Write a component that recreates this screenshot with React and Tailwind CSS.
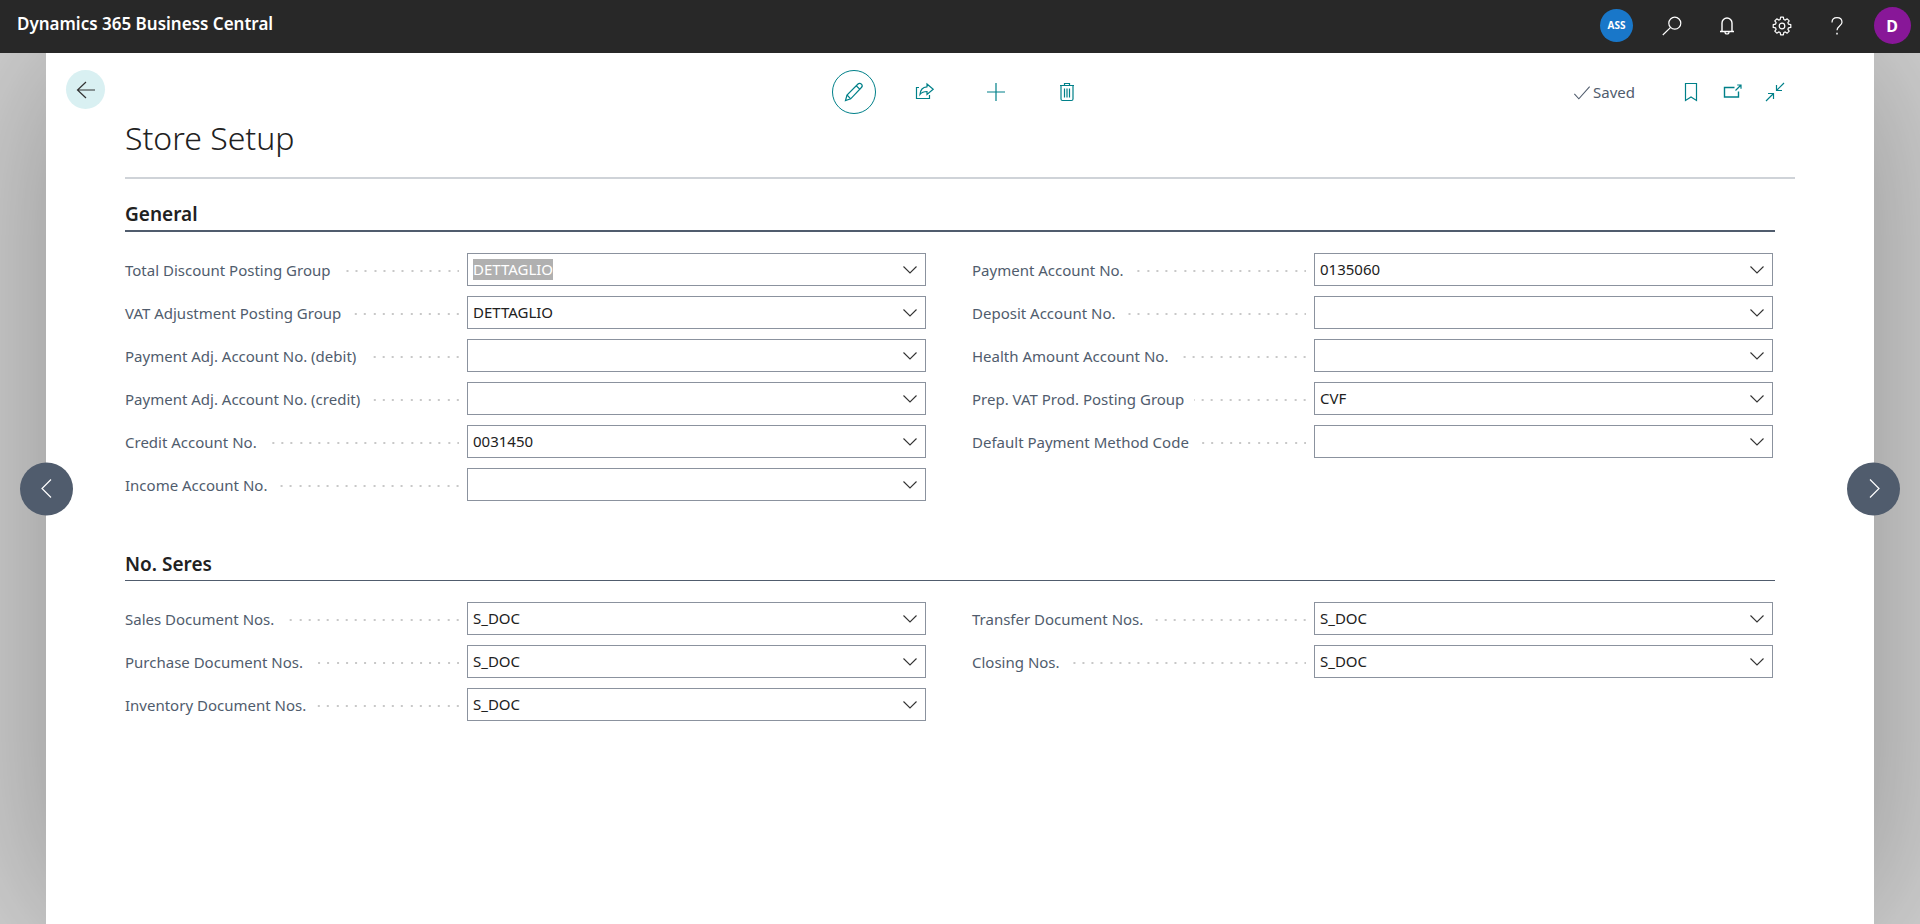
import React from 'react';

const generalLeft = [
  { id: 'totalDiscount', label: 'Total Discount Posting Group', value: 'DETTAGLIO', selected: true },
  { id: 'vatAdjustment', label: 'VAT Adjustment Posting Group', value: 'DETTAGLIO' },
  { id: 'paymentDebit', label: 'Payment Adj. Account No. (debit)', value: '' },
  { id: 'paymentCredit', label: 'Payment Adj. Account No. (credit)', value: '' },
  { id: 'creditAccount', label: 'Credit Account No.', value: '0031450' },
  { id: 'incomeAccount', label: 'Income Account No.', value: '' },
];

const generalRight = [
  { id: 'paymentAccount', label: 'Payment Account No.', value: '0135060' },
  { id: 'depositAccount', label: 'Deposit Account No.', value: '' },
  { id: 'healthAmount', label: 'Health Amount Account No.', value: '' },
  { id: 'prepVat', label: 'Prep. VAT Prod. Posting Group', value: 'CVF' },
  { id: 'defaultPayment', label: 'Default Payment Method Code', value: '' },
];

const seriesLeft = [
  { id: 'salesNos', label: 'Sales Document Nos.', value: 'S_DOC' },
  { id: 'purchaseNos', label: 'Purchase Document Nos.', value: 'S_DOC' },
  { id: 'inventoryNos', label: 'Inventory Document Nos.', value: 'S_DOC' },
];

const seriesRight = [
  { id: 'transferNos', label: 'Transfer Document Nos.', value: 'S_DOC' },
  { id: 'closingNos', label: 'Closing Nos.', value: 'S_DOC' },
];

const Icon = ({ children, className = 'size-5' }) => (
  <svg
    viewBox="0 0 20 20"
    fill="none"
    stroke="currentColor"
    strokeWidth="1.2"
    className={className}
    aria-hidden="true"
  >
    {children}
  </svg>
);

const SearchIcon = () => (
  <Icon>
    <circle cx="12.8" cy="7.2" r="6" />
    <path d="M8.6 11.4L.8 19" />
  </Icon>
);

const BellIcon = () => (
  <Icon>
    <path d="M3 15.5h14M5 15.5V7a5 5 0 0 1 10 0v8.5" strokeWidth="1.4" />
    <path d="M8 16a2 2 0 0 0 4 0" />
  </Icon>
);

const GearIcon = () => (
  <Icon>
    <circle cx="10" cy="10" r="2.8" />
    <path
      strokeLinejoin="round"
      d="M8.6 1.2h2.8l.4 2.3 1.5.6 1.9-1.3 2 2-1.3 1.9.6 1.5 2.3.4v2.8l-2.3.4-.6 1.5 1.3 1.9-2 2-1.9-1.3-1.5.6-.4 2.3H8.6l-.4-2.3-1.5-.6-1.9 1.3-2-2 1.3-1.9-.6-1.5-2.3-.4V8.6l2.3-.4.6-1.5-1.3-1.9 2-2 1.9 1.3 1.5-.6z"
    />
  </Icon>
);

const HelpIcon = () => (
  <Icon>
    <path d="M5 6.5C5 3.4 7 1.6 10 1.6s5 1.8 5 4.6c0 3.6-5 4.2-5 8.1" />
    <path d="M10 16.8v1.8" strokeWidth="1.5" />
  </Icon>
);

const BackIcon = () => (
  <Icon>
    <path d="M19 10H1.5M10 2L1.5 10l8.5 8" />
  </Icon>
);

const PencilIcon = () => (
  <Icon>
    <path d="M1.500 18.500l1.500-5.500L14 2c1-1 2.500-.8 3.400.1s1 2.400 0 3.400L6.700 16.800z" />
    <path d="M12.200 3.800l3.800 3.600M3 13l3.700 3.800" />
  </Icon>
);

const ShareIcon = () => (
  <Icon>
    <path d="M4 5.500H1.500v11h13V13" />
    <path d="M12 2l6.200 5.200L12 12.500V9.500c-3.500 0-5.500 1-7 3 .3-4.500 2.700-7.400 7-7.700z" />
  </Icon>
);

const PlusIcon = () => (
  <Icon>
    <path d="M10 1v18M1 10h18" />
  </Icon>
);

const TrashIcon = () => (
  <Icon>
    <path d="M3 3.500h14M7.500 3.500v-2h5v2M4 3.500V17a1.500 1.500 0 0 0 1.500 1.500h9A1.500 1.500 0 0 0 16 17V3.500" />
    <path d="M7.500 6.500v9M10 6.500v9M12.500 6.500v9" />
  </Icon>
);

const CheckIcon = () => (
  <Icon className="size-[18px]">
    <path d="M1.500 12l5 5.500L18.500 4" />
  </Icon>
);

const BookmarkIcon = () => (
  <Icon>
    <path d="M4.500 1.500h11v17L10 15l-5.500 3.500z" />
  </Icon>
);

const PopOutIcon = () => (
  <Icon>
    <path d="M11.500 5.500H1.500v9.500h14V9.500" strokeWidth="1.4" />
    <path d="M12.500 8.500L18 3M14.200 3H18v3.800" />
  </Icon>
);

const CollapseIcon = () => (
  <Icon>
    <path d="M1 19l7.500-7.500M3 11.500h5.500V17M19 1l-7.500 7.500M17 8.500h-5.500V3" />
  </Icon>
);

const ChevronDown = () => (
  <svg viewBox="0 0 16 16" fill="none" stroke="currentColor" strokeWidth="1.1" className="size-4" aria-hidden="true">
    <path d="M1.500 4.500L8 11l6.500-6.500" />
  </svg>
);

const LookupField = ({ id, label, value, selected }) => (
  <div className="flex items-center">
    <div className="flex w-[342px] shrink-0 items-center gap-2.5 pr-2">
      <label htmlFor={id} className="pt-0.5 whitespace-nowrap text-[#505c6d]">
        {label}
      </label>
      <span className="mt-[3px] h-0.5 flex-1 bg-[linear-gradient(to_right,transparent_7px,#c8c8c8_7px_9px,transparent_9px_16px,#c8c8c8_16px_18px,transparent_18px_26px,#c8c8c8_26px_28px,transparent_28px_35px,#c8c8c8_35px_37px)] bg-[length:37px_2px] bg-right bg-repeat-x" />
    </div>
    <div className="flex h-[33px] min-w-0 flex-1 items-center border border-[#8b929e] bg-white">
      <input
        id={id}
        type="text"
        defaultValue={value}
        autoFocus={selected}
        onFocus={(e) => e.target.select()}
        className="ml-[5px] h-[21px] min-w-0 flex-1 leading-[21px] text-[#212121] outline-none selection:bg-[#b0b0b0] selection:text-white"
      />
      <button type="button" aria-label={'Choose a value for ' + label} className="flex w-[30px] justify-center text-[#333]">
        <ChevronDown />
      </button>
    </div>
  </div>
);

const FieldColumn = ({ fields }) => (
  <div className="flex flex-col gap-2.5">
    {fields.map((field) => (
      <LookupField key={field.id} {...field} />
    ))}
  </div>
);

const App = () => {
  return (
    <div className="flex min-h-screen flex-col font-['Noto_Sans','Open_Sans',sans-serif] text-[15px] leading-[21px] text-[#212121]">
      <header className="flex h-[53px] items-center justify-between bg-[#282828] pb-0.5 text-white">
        <a href="#" className="pb-1 pl-[17px] text-[17px] leading-6 font-semibold">
          Dynamics 365 Business Central
        </a>
        <nav className="flex items-center">
          <button type="button" className="flex w-[55px] justify-center">
            <span className="flex size-[33px] items-center justify-center rounded-full bg-[#1977c9] text-[10px] font-bold">ASS</span>
          </button>
          <button type="button" aria-label="Search" className="flex w-[55px] justify-center"><SearchIcon /></button>
          <button type="button" aria-label="Notifications" className="flex w-[55px] justify-center"><BellIcon /></button>
          <button type="button" aria-label="Settings" className="flex w-[55px] justify-center"><GearIcon /></button>
          <button type="button" aria-label="Help" className="flex w-[55px] justify-center"><HelpIcon /></button>
          <button type="button" className="flex w-14 justify-center">
            <span className="flex size-[37px] items-center justify-center rounded-full bg-[#881798] text-base font-bold">D</span>
          </button>
        </nav>
      </header>

      <div className="relative flex flex-1 overflow-hidden bg-[#d0d0d0] px-[46px]">
        <main className="flex-1 bg-white pt-[17px] shadow-[0_0_160px_rgba(0,0,0,0.31)]">
          <div className="grid grid-cols-3 items-center px-5">
            <div className="self-start">
              <button type="button" aria-label="Back" className="flex size-[39px] items-center justify-center rounded-full bg-[#d9f0f2] text-[#333]">
                <BackIcon />
              </button>
            </div>
            <div className="flex items-center justify-center gap-[27px] text-[#008089]">
              <button type="button" aria-label="Edit" className="flex size-11 items-center justify-center rounded-full border border-[#008089]"><PencilIcon /></button>
              <button type="button" aria-label="Share" className="flex size-11 items-center justify-center"><ShareIcon /></button>
              <button type="button" aria-label="New" className="flex size-11 items-center justify-center"><PlusIcon /></button>
              <button type="button" aria-label="Delete" className="flex size-11 items-center justify-center"><TrashIcon /></button>
            </div>
            <div className="flex items-center justify-end gap-[22px] pr-[69px] text-[#008089]">
              <span className="mr-6 flex items-center gap-0.5 text-[#505c6d]">
                <CheckIcon />
                Saved
              </span>
              <button type="button" aria-label="Bookmark"><BookmarkIcon /></button>
              <button type="button" aria-label="Open in new window"><PopOutIcon /></button>
              <button type="button" aria-label="Collapse"><CollapseIcon /></button>
            </div>
          </div>

          <div className="px-[79px]">
            <h1 className="border-b-2 border-[#cfd3d8] pb-[15px] text-[32px] leading-[48px] font-light">Store Setup</h1>

            <section className="pt-[21px] pr-5">
              <h2 className="border-b-2 border-[#505c6d] pb-0.5 text-[19px] leading-7 font-semibold">General</h2>
              <div className="grid grid-cols-2 gap-[46px] pt-[21px] pr-0.5">
                <FieldColumn fields={generalLeft} />
                <FieldColumn fields={generalRight} />
              </div>
            </section>

            <section className="pt-[49px] pr-5">
              <h2 className="border-b border-[#505c6d] pb-0.5 text-[19px] leading-7 font-semibold">No. Seres</h2>
              <div className="grid grid-cols-2 gap-[46px] pt-[21px] pr-0.5">
                <FieldColumn fields={seriesLeft} />
                <FieldColumn fields={seriesRight} />
              </div>
            </section>
          </div>
        </main>

        <button type="button" aria-label="Previous" className="absolute top-1/2 left-5 flex size-[53px] -translate-y-1/2 items-center justify-center rounded-full bg-[#505c6d] text-white">
          <Icon>
            <path d="M14 1L5 10l9 9" />
          </Icon>
        </button>
        <button type="button" aria-label="Next" className="absolute top-1/2 right-5 flex size-[53px] -translate-y-1/2 items-center justify-center rounded-full bg-[#505c6d] text-white">
          <Icon>
            <path d="M6 1l9 9-9 9" />
          </Icon>
        </button>
      </div>
    </div>
  );
};

export default App;
